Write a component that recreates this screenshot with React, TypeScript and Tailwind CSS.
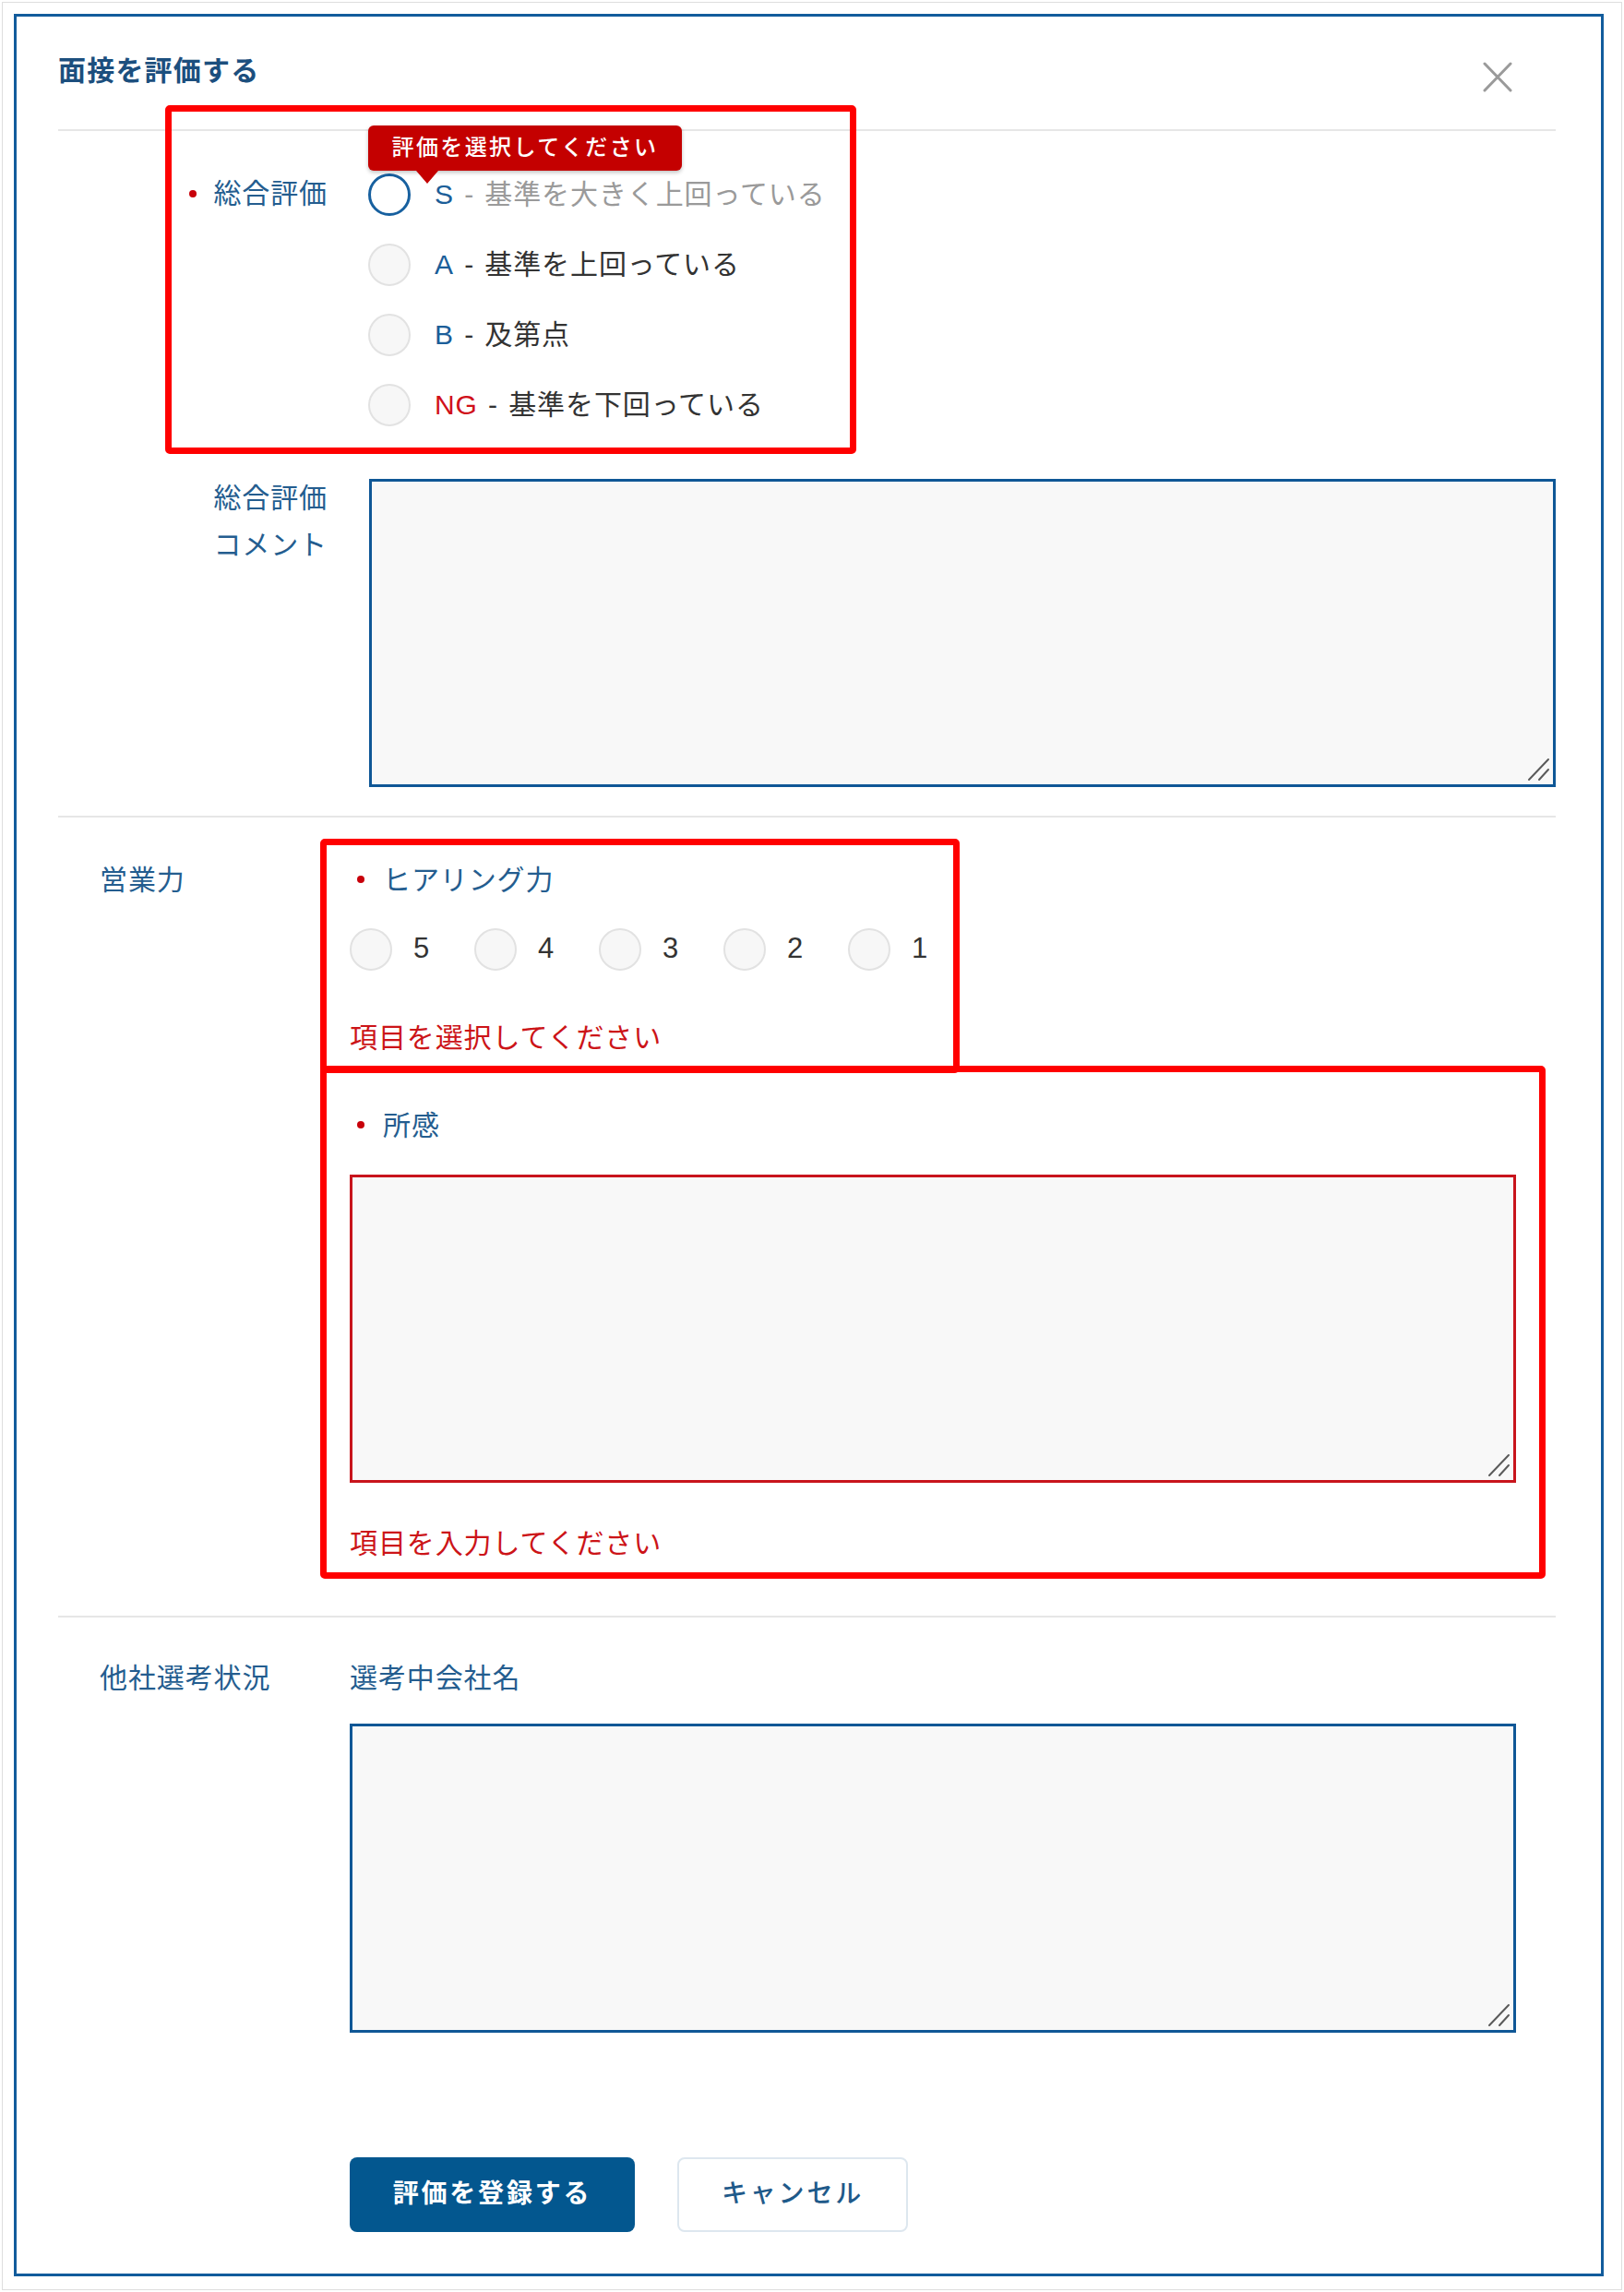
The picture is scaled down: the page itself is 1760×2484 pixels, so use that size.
import React from "react";

const Dot = ({ className = "" }: { className?: string }) => (
  <span className={"inline-block w-[8px] h-[8px] rounded-full bg-[#c8000a] shrink-0 " + className} />
);

const Radio = ({ active = false }: { active?: boolean }) =>
  active ? (
    <span className="block w-[46px] h-[46px] rounded-full border-[3px] border-[#17609f] bg-white shrink-0" />
  ) : (
    <span className="block w-[46px] h-[46px] rounded-full border-2 border-[#e2e2e2] bg-[#f7f7f7] shrink-0" />
  );

const Handle = () => (
  <svg className="absolute right-[6px] bottom-[6px]" width="26" height="26" viewBox="0 0 26 26">
    <line x1="3" y1="24" x2="24" y2="2" stroke="#5a5a5a" strokeWidth="2" strokeLinecap="round" />
    <line x1="14" y1="24" x2="24" y2="13" stroke="#5a5a5a" strokeWidth="2" strokeLinecap="round" />
  </svg>
);

const TextArea = ({ error = false }: { error?: boolean }) => (
  <div className="relative w-full h-full">
    <textarea
      className={
        "block w-full h-full resize-none outline-none bg-[#f8f8f8] " +
        (error ? "border-[3px] border-[#c8141c]" : "border-[3px] border-[#0f5796]")
      }
    />
    <Handle />
  </div>
);

export default function App() {
  const opts = [
    { k: "S", kc: "text-[#1b5e99]", d: "基準を大きく上回っている", dc: "text-[#9a9a9a]", active: true },
    { k: "A", kc: "text-[#1b5e99]", d: "基準を上回っている", dc: "text-[#333333]" },
    { k: "B", kc: "text-[#1b5e99]", d: "及第点", dc: "text-[#333333]" },
    { k: "NG", kc: "text-[#d0101a]", d: "基準を下回っている", dc: "text-[#333333]" },
  ];
  return (
    <div className="relative w-[1760px] h-[2484px] bg-white p-[2px] font-['Liberation_Sans','Noto_Sans_CJK_JP',sans-serif] text-[30px] tracking-[0.03em]">
      <div className="h-full border border-[#dedede] pt-[12px] pl-[12px] pr-[19px] pb-[14px]">
        <div className="h-full border-[3px] border-[#125c9c] flex flex-col pl-[45px] pr-[49px]">
          {/* header */}
          <div className="h-[124px] shrink-0 flex justify-between border-b-2 border-[#e6e6e6]">
            <div className="mt-[39px] text-[30px] leading-[40px] font-bold tracking-[0.04em] text-[#1c4f7e]">
              面接を評価する
            </div>
            <svg className="mt-[49px] mr-[46px]" width="34" height="33" viewBox="0 0 34 33">
              <line x1="3" y1="2" x2="31" y2="31" stroke="#9a9a9a" strokeWidth="3" strokeLinecap="round" />
              <line x1="31" y1="2" x2="3" y2="31" stroke="#9a9a9a" strokeWidth="3" strokeLinecap="round" />
            </svg>
          </div>

          {/* section 1 */}
          <div className="shrink-0 pt-[46px] pb-[31px] border-b-2 border-[#e6e6e6]">
            <div className="flex">
              <div className="w-[292px] h-[46px] pb-[3px] flex justify-end items-center text-[#245d8f]">
                <Dot className="mr-[18px]" />
                <span>総合評価</span>
              </div>
              <div className="ml-[44px] flex flex-col gap-[30px]">
                {opts.map((o) => (
                  <div key={o.k} className="relative h-[46px] flex items-center">
                    {o.active && (
                      <div className="absolute left-0 top-[-52px] w-[340px] h-[49px] pb-[1px] rounded-[6px] bg-[#c40000] shadow-[0_2px_4px_rgba(0,0,0,0.25)] flex items-center justify-center text-white text-[24px] font-medium tracking-[0.1em] z-10">
                        評価を選択してください
                        <span className="absolute left-[52px] top-full w-0 h-0 border-l-[12px] border-r-[12px] border-t-[14px] border-l-transparent border-r-transparent border-t-[#c40000]" />
                      </div>
                    )}
                    <Radio active={o.active} />
                    <span className="ml-[26px] leading-[40px] whitespace-nowrap">
                      <span className={o.kc}>{o.k}</span>
                      <span className={o.dc}>
                        <span className="mx-[2px]"> - </span>
                        {o.d}
                      </span>
                    </span>
                  </div>
                ))}
              </div>
            </div>
            <div className="flex mt-[57px]">
              <div className="w-[292px] text-right text-[#245d8f] leading-[51px] -mt-[5px]">
                総合評価
                <br />
                コメント
              </div>
              <div className="ml-[45px] flex-1 h-[334px]">
                <TextArea />
              </div>
            </div>
          </div>

          {/* section 2 */}
          <div className="shrink-0 pt-[48px] pb-[58px] border-b-2 border-[#e6e6e6] flex">
            <div className="w-[316px] pl-[45px] leading-[40px] text-[#245d8f]">営業力</div>
            <div className="flex-1 pr-[43px]">
              <div className="h-[40px] pb-[2px] flex items-center text-[#245d8f]">
                <Dot className="ml-[8px] mr-[20px]" />
                <span>ヒアリング力</span>
              </div>
              <div className="mt-[32px] h-[46px] flex">
                {["5", "4", "3", "2", "1"].map((n) => (
                  <div key={n} className="w-[135px] flex items-center">
                    <Radio />
                    <span className="ml-[23px] pb-[2px] text-[31px] text-[#333333]">{n}</span>
                  </div>
                ))}
              </div>
              <div className="mt-[53px] leading-[40px] text-[#cc1418]">項目を選択してください</div>
              <div className="mt-[55px] h-[40px] pb-[2px] flex items-center text-[#245d8f]">
                <Dot className="ml-[8px] mr-[20px]" />
                <span>所感</span>
              </div>
              <div className="mt-[33px] h-[334px]">
                <TextArea error />
              </div>
              <div className="mt-[46px] leading-[40px] text-[#cc1418]">項目を入力してください</div>
            </div>
          </div>

          {/* section 3 */}
          <div className="flex-1 pt-[46px] flex">
            <div className="w-[316px] pl-[45px] leading-[40px] text-[#245d8f]">他社選考状況</div>
            <div className="flex-1 pr-[43px]">
              <div className="leading-[40px] text-[#245d8f]">選考中会社名</div>
              <div className="mt-[29px] h-[335px]">
                <TextArea />
              </div>
              <div className="mt-[135px] flex gap-[46px]">
                <button className="w-[309px] h-[81px] pb-[2px] rounded-[8px] bg-[#03578f] text-white font-bold text-[28px] tracking-[0.1em]">
                  評価を登録する
                </button>
                <button className="w-[250px] h-[81px] pb-[2px] rounded-[8px] border-2 border-[#dde7ef] bg-white text-[#1f5a8a] font-medium text-[28px] tracking-[0.1em]">
                  キャンセル
                </button>
              </div>
            </div>
          </div>
        </div>
      </div>

      {/* annotation boxes */}
      <div className="absolute left-[179px] top-[114px] w-[749px] h-[378px] border-[7px] border-[#ff0000] rounded-[5px] pointer-events-none" />
      <div className="absolute left-[347px] top-[909px] w-[693px] h-[254px] border-[7px] border-[#ff0000] rounded-[5px] pointer-events-none" />
      <div className="absolute left-[347px] top-[1155px] w-[1328px] h-[556px] border-[7px] border-[#ff0000] rounded-[5px] pointer-events-none" />
    </div>
  );
}
